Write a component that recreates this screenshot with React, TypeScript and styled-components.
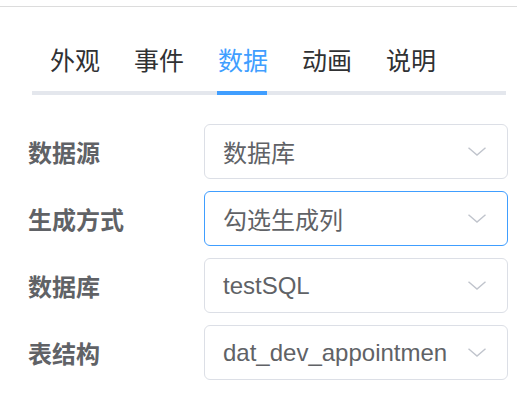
import React from "react";
import styled, { createGlobalStyle } from "styled-components";

const Global = createGlobalStyle`
  html, body { margin: 0; padding: 0; background: #fff; }
  body { font-family: "Liberation Sans", "Noto Sans CJK SC", sans-serif; }
`;

const Panel = styled.div`
  margin-top: 6px;
  border-top: 1px solid #dcdcdc;
  width: 517px;
  height: 400px;
  box-sizing: border-box;
`;

const TabNav = styled.div`
  position: relative;
  display: flex;
  margin: 21px 11px 0 32px;
  border-bottom: 4px solid #e4e7ed;
`;

const TabItem = styled.div<{ $active?: boolean }>`
  position: relative;
  padding: 0 16px 0 18px;
  height: 63px;
  line-height: 63px;
  font-family: "Noto Sans CJK SC", sans-serif;
  font-size: 25px;
  color: ${(p) => (p.$active ? "#409eff" : "#303133")};
  &::after {
    content: "";
    display: ${(p) => (p.$active ? "block" : "none")};
    position: absolute;
    left: 17px;
    right: 17px;
    bottom: -4px;
    height: 4px;
    background: #409eff;
  }
`;

const Form = styled.div`
  display: flex;
  flex-direction: column;
  gap: 12px;
  padding: 29px 9px 0 28px;
`;

const Row = styled.div`
  display: flex;
  align-items: center;
  height: 55px;
`;

const Label = styled.div`
  width: 176px;
  flex-shrink: 0;
  font-family: "Noto Sans CJK SC", sans-serif;
  font-weight: 700;
  font-size: 24px;
  color: #606266;
`;

const Select = styled.div<{ $focused?: boolean }>`
  flex: 1;
  min-width: 0;
  height: 55px;
  box-sizing: border-box;
  border: 1px solid ${(p) => (p.$focused ? "#409eff" : "#dcdfe6")};
  border-radius: 6px;
  display: flex;
  align-items: center;
  padding: 0 21px 0 18px;
`;

const Value = styled.div`
  flex: 1;
  min-width: 0;
  overflow: hidden;
  white-space: nowrap;
  font-size: 24px;
  color: #606266;
  margin-right: 14px;
`;

const Chevron = () => (
  <svg width="18" height="9" viewBox="0 0 18 9" style={{ flexShrink: 0 }}>
    <polyline points="0.5,0.8 9,8 17.5,0.8" fill="none" stroke="#c0c4cc" strokeWidth="1.4" />
  </svg>
);

const tabs = ["外观", "事件", "数据", "动画", "说明"];
const rows = [
  { label: "数据源", value: "数据库" },
  { label: "生成方式", value: "勾选生成列", focused: true },
  { label: "数据库", value: "testSQL" },
  { label: "表结构", value: "dat_dev_appointmen" },
];

export default function App() {
  return (
    <>
      <Global />
      <Panel>
        <TabNav>
          {tabs.map((t) => (
            <TabItem key={t} $active={t === "数据"}>
              {t}
            </TabItem>
          ))}
        </TabNav>
        <Form>
          {rows.map((r) => (
            <Row key={r.label}>
              <Label>{r.label}</Label>
              <Select $focused={r.focused}>
                <Value>{r.value}</Value>
                <Chevron />
              </Select>
            </Row>
          ))}
        </Form>
      </Panel>
    </>
  );
}
